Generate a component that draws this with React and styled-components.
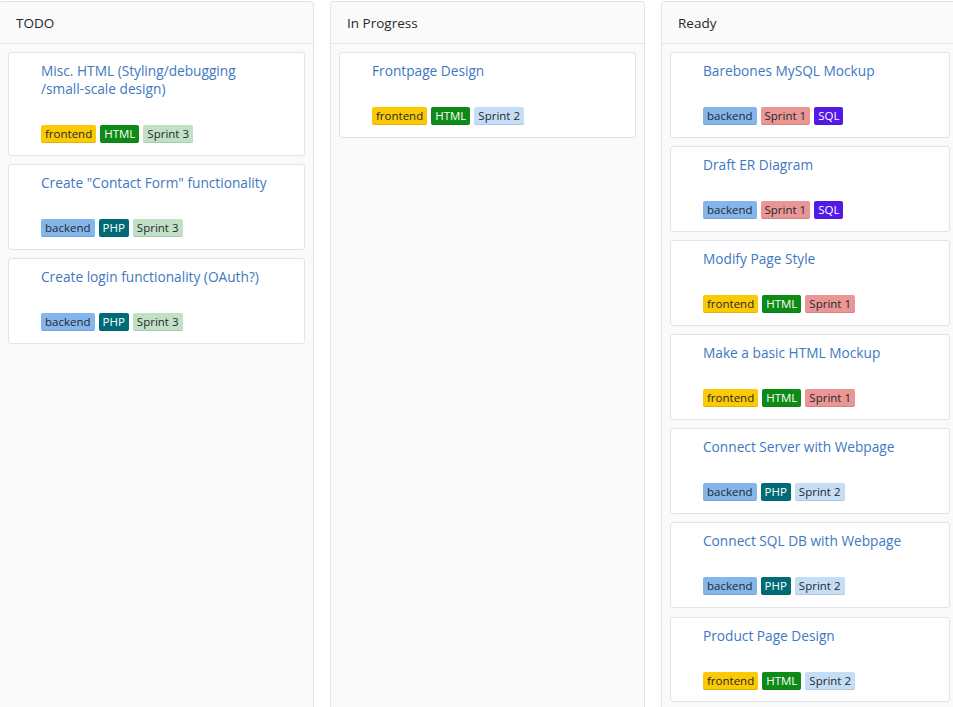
import React from "react";
import styled, { createGlobalStyle } from "styled-components";

const GlobalStyle = createGlobalStyle`
  html, body {
    margin: 0;
    padding: 0;
    background: #fff;
    overflow: hidden;
  }
  body {
    font-family: "Open Sans", "Noto Sans", sans-serif;
    color: #24292e;
  }
`;

const LABELS = {
  frontend: { bg: "#fbca04", fg: "#24292e" },
  backend: { bg: "#84b6eb", fg: "#24292e" },
  HTML: { bg: "#0e8a16", fg: "#fff" },
  PHP: { bg: "#006b75", fg: "#fff" },
  SQL: { bg: "#5319e7", fg: "#fff" },
  "Sprint 1": { bg: "#e99695", fg: "#24292e" },
  "Sprint 2": { bg: "#c5def5", fg: "#24292e" },
  "Sprint 3": { bg: "#c2e0c6", fg: "#24292e" }
};

const NoWrap = styled.span`
  white-space: nowrap;
`;

const columns = [
  {
    name: "TODO",
    width: 315,
    offset: -1,
    cards: [
      {
        id: 1,
        title: <>Misc. HTML (Styling/debugging <NoWrap>/small-scale</NoWrap> design)</>,
        labels: ["frontend", "HTML", "Sprint 3"]
      },
      { id: 2, title: "Create \"Contact Form\" functionality", labels: ["backend", "PHP", "Sprint 3"] },
      { id: 3, title: "Create login functionality (OAuth?)", labels: ["backend", "PHP", "Sprint 3"] }
    ]
  },
  {
    name: "In Progress",
    width: 315,
    cards: [
      { id: 4, title: "Frontpage Design", labels: ["frontend", "HTML", "Sprint 2"] }
    ]
  },
  {
    name: "Ready",
    width: 298,
    cards: [
      { id: 5, title: "Barebones MySQL Mockup", labels: ["backend", "Sprint 1", "SQL"] },
      { id: 6, title: "Draft ER Diagram", labels: ["backend", "Sprint 1", "SQL"] },
      { id: 7, title: "Modify Page Style", labels: ["frontend", "HTML", "Sprint 1"] },
      { id: 8, title: "Make a basic HTML Mockup", labels: ["frontend", "HTML", "Sprint 1"] },
      { id: 9, title: "Connect Server with Webpage", labels: ["backend", "PHP", "Sprint 2"] },
      { id: 10, title: "Connect SQL DB with Webpage", labels: ["backend", "PHP", "Sprint 2"] },
      { id: 11, title: "Product Page Design", labels: ["frontend", "HTML", "Sprint 2"] }
    ]
  }
];

export default function App() {
  return (
    <>
      <GlobalStyle />
      <Board>
        {columns.map(col => (
          <Column key={col.name} $width={col.width} $offset={col.offset}>
            <ColumnHeader>{col.name}</ColumnHeader>
            <CardList>
              {col.cards.map(card => (
                <Card key={card.id}>
                  <Title href="#">{card.title}</Title>
                  <Labels>
                    {card.labels.map(l => (
                      <Label key={l} $bg={LABELS[l].bg} $fg={LABELS[l].fg}>
                        {l}
                      </Label>
                    ))}
                  </Labels>
                </Card>
              ))}
            </CardList>
          </Column>
        ))}
      </Board>
    </>
  );
}

const Board = styled.div`
  display: flex;
  align-items: stretch;
  gap: 16px;
  padding-top: 1px;
  height: 720px;
  box-sizing: border-box;
`;

const Column = styled.section`
  flex: 0 0 ${p => p.$width}px;
  margin-left: ${p => p.$offset || 0}px;
  box-sizing: border-box;
  background: #fafafa;
  border: 1px solid #e1e4e8;
  border-radius: 3px;
  display: flex;
  flex-direction: column;
`;

const ColumnHeader = styled.h3`
  margin: 0;
  height: 41px;
  padding: 0 16px;
  display: flex;
  align-items: center;
  font-size: 13.5px;
  font-weight: 400;
  color: #24292e;
  border-bottom: 1px solid #e1e4e8;
`;

const CardList = styled.div`
  padding: 8px;
  display: flex;
  flex-direction: column;
  gap: 8.6px;
`;

const Card = styled.article`
  background: #fff;
  border: 1px solid #e1e4e8;
  border-radius: 3px;
  padding: 9px 10px 11.5px 32px;
`;

const Title = styled.a`
  display: block;
  font-size: 13.7px;
  line-height: 18px;
  color: #4078c0;
  text-decoration: none;
`;

const Labels = styled.div`
  display: flex;
  gap: 4px;
  margin-top: 27px;
`;

const Label = styled.span`
  display: inline-block;
  height: 18px;
  line-height: 18px;
  padding: 0 4px;
  font-size: 11.5px;
  border-radius: 2px;
  background: ${p => p.$bg};
  color: ${p => p.$fg};
  box-shadow: inset 0 -1px 0 rgba(27, 31, 35, 0.12);
`;
